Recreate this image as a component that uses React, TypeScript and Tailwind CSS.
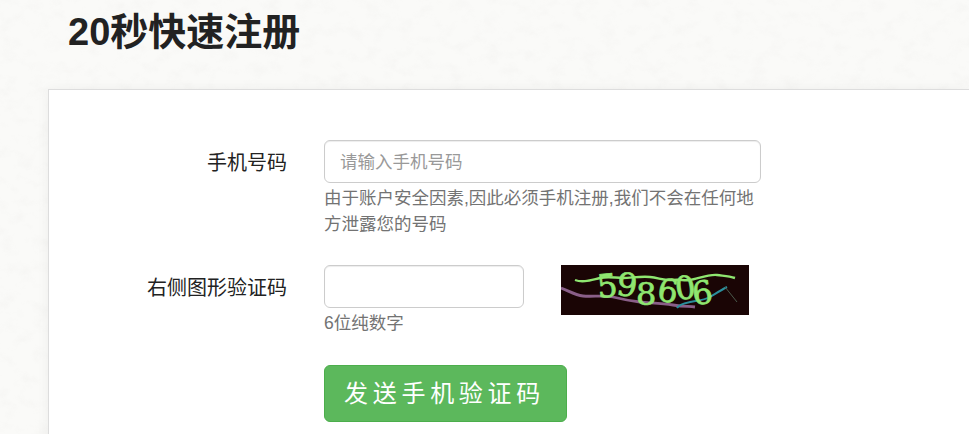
const font = { fontFamily: '"Liberation Sans", "Noto Sans CJK SC", sans-serif' };

// paper texture behind the page
function Paper() {
    return (
        <svg className="absolute inset-0 w-full h-full" aria-hidden="true">
            <filter id="paper">
                <feTurbulence type="fractalNoise" baseFrequency="0.06 0.08" numOctaves="5" seed="7" />
                <feColorMatrix values="0 0 0 0 0.6  0 0 0 0 0.58  0 0 0 0 0.56  1.3 0 0 0 -0.62" />
            </filter>
            <rect width="100%" height="100%" filter="url(#paper)" opacity="0.14" />
        </svg>
    );
}

function Captcha() {
    return (
        <svg width="188" height="50" viewBox="0 0 188 50" className="shrink-0 bg-[#1a0505]">
            <path d="M0 23 C8 26 14 30 22 31 S44 30 52 32 S70 36 79 37 S100 38 112 40 S128 41 134 42" fill="none" stroke="#8a5f88" strokeWidth="2.8" />
            <path d="M116 43 C118 39 124 38 129 37 S144 35 149 32 S160 25 166 22" fill="none" stroke="#2a8f9c" strokeWidth="2" />
            <path d="M164 22 L176 37" fill="none" stroke="#4a5a4c" strokeWidth="1" />
            <path d="M14 15 C22 18 30 15 39 13 S54 13 62 13 S80 11 89 12 S104 16 112 15 S122 16 129 15 S148 9 156 10 S168 11 174 13" fill="none" stroke="#8fe670" strokeWidth="2.4" />
            <g fill="#8fe670" stroke="#8fe670" strokeWidth="0.7" fontFamily='"DejaVu Serif", serif' fontSize="32">
                <text x="36" y="32" transform="rotate(-6 46 20)">5</text>
                <text x="56" y="31" transform="rotate(8 66 20)">9</text>
                <text x="75" y="40">8</text>
                <text x="97" y="37" transform="rotate(10 107 25)">6</text>
                <text x="114" y="34" transform="rotate(-8 124 23)">0</text>
                <text x="131" y="39" transform="rotate(-8 141 27)">6</text>
            </g>
        </svg>
    );
}

export default function App() {
    return (
        <div className="relative h-[434px] overflow-hidden bg-[#fafaf8]" style={font}>
            <Paper />
            <h1 className="relative pl-[68px] pt-[9px] h-[89px] text-[38px] leading-[46px] font-bold text-[#222]">20秒快速注册</h1>

            <div className="relative ml-12 h-[400px] bg-white border-l border-t border-[#ddd] shadow-[0_0_12px_rgba(0,0,0,0.05)] pt-[50px]">
                {/* phone */}
                <div className="flex">
                    <label className="w-[238px] h-[43px] text-right text-[20px] leading-[46px] text-[#222]">手机号码</label>
                    <div className="ml-[37px] w-[437px]">
                        <input
                            placeholder="请输入手机号码"
                            className="block w-full h-[43px] px-[15px] pt-[2px] border border-[#ccc] rounded-md bg-white text-[17.5px] shadow-[inset_0_1px_1px_rgba(0,0,0,0.075)] placeholder:text-[#999] outline-none"
                        />
                        <p className="w-[432px] mt-[2px] text-[17.5px] leading-[26px] text-[#737373]">
                            由于账户安全因素,因此必须手机注册,我们不会在任何地方泄露您的号码
                        </p>
                    </div>
                </div>

                {/* captcha */}
                <div className="flex mt-[28px]">
                    <label className="w-[238px] h-[43px] text-right text-[20px] leading-[46px] text-[#222]">右侧图形验证码</label>
                    <div className="ml-[37px] w-[200px]">
                        <input className="block w-full h-[43px] px-[15px] border border-[#ccc] rounded-md bg-white shadow-[inset_0_1px_1px_rgba(0,0,0,0.075)] outline-none" />
                        <p className="mt-[2px] text-[17.5px] leading-[26px] text-[#737373]">6位纯数字</p>
                    </div>
                    <div className="ml-[37px]">
                        <Captcha />
                    </div>
                </div>

                <button className="block ml-[275px] mt-[29px] w-[243px] h-[57px] pr-[2px] rounded-md border border-[#4cae4c] bg-[#5cb85c] text-white text-[24px] tracking-[4.7px]">
                    发送手机验证码
                </button>
            </div>
        </div>
    );
}
